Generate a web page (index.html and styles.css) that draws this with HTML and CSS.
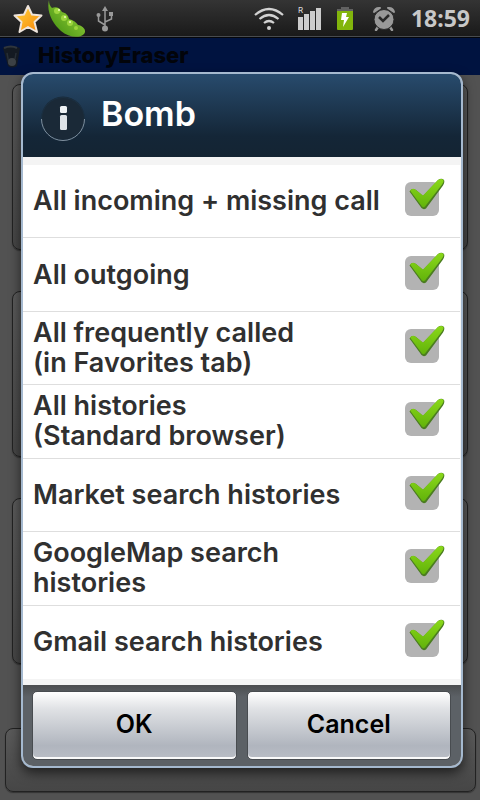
FILE: index.html
```html
<!DOCTYPE html>
<html lang="en">
<head>
<meta charset="utf-8">
<meta name="viewport" content="width=device-width, initial-scale=1">
<title>HistoryEraser</title>
<link rel="stylesheet" href="styles.css">
</head>
<body>
<svg class="defs" aria-hidden="true">
  <defs>
    <linearGradient id="green" x1="0" y1="0" x2="0" y2="1"><stop offset="0" stop-color="#8ad81a"/><stop offset="1" stop-color="#62b30a"/></linearGradient>
    <symbol id="tick" viewBox="0 0 38 32">
      <path d="M.5 13.500Q3 9.500 7 12L14 18L29 2Q32.500-.5 35 2Q36 4.500 34 7.500L17 30.500Q14.500 32 12.500 30z" fill="#4b7d20"/>
      <path d="M1 12.500Q3.500 9.500 7 12L14 17.500L29 2Q32.500 0 34.500 2Q35 4 33 6.500L16 28.500Q14.500 30 13 28.500z" fill="url(#green)"/>
    </symbol>
  </defs>
</svg>
<header class="status">
  <div class="group">
    <svg width="30" height="30" viewBox="0 0 30 30" aria-hidden="true">
      <defs><linearGradient id="gold" x1="0" y1="0" x2="1" y2="1"><stop offset="0" stop-color="#ffd63c"/><stop offset="1" stop-color="#f88408"/></linearGradient></defs>
      <path d="M15 2l4 8.500 9.500 1-7 6.500 2.500 10-9-5-8.500 5 2-10-7-6.500 9.500-1z" fill="url(#gold)" stroke="#eee4dc" stroke-width="2" stroke-linejoin="round"/>
    </svg>
    <svg width="40" height="37" viewBox="0 0 40 37" aria-hidden="true">
      <defs><linearGradient id="pod" x1="1" y1="0" x2="0" y2="1"><stop offset="0" stop-color="#a5dc43"/><stop offset="1" stop-color="#3b8a0c"/></linearGradient></defs>
      <path d="M1 0C1 4 2 6 4 8C8 6 12 8 14 12C18 13 20 15 21 19C25 20 28 22 30 25C35 26 39 30 36 34C31 39 20 37 13 31C5 24-2 12 1 0z" fill="url(#pod)"/>
      <circle cx="9" cy="11" r="3" fill="#9cd53d"/><circle cx="16" cy="18" r="3" fill="#9cd53d"/><circle cx="22" cy="23" r="3" fill="#9cd53d"/><circle cx="28" cy="28" r="2" fill="#9cd53d"/>
      <circle cx="11" cy="10" r="1" fill="#efb"/><circle cx="17" cy="17" r="1" fill="#efb"/><circle cx="22" cy="22" r="1" fill="#efb"/>
    </svg>
    <svg width="22" height="26" viewBox="-3 0 22 26" fill="none" stroke="#999" stroke-width="1.500" aria-hidden="true">
      <path d="M9 22V3M9 19L2.500 15V10M9 16L15.500 13V9"/><path d="M9 0l3 5H6z" fill="#999" stroke="none"/><circle cx="9" cy="22.500" r="3" fill="#999" stroke="none"/><circle cx="2.500" cy="9" r="2" fill="#999" stroke="none"/><path d="M13 6h4v4h-4z" fill="#999" stroke="none"/>
    </svg>
  </div>
  <div class="group right">
    <svg width="30" height="24" viewBox="0 0 30 24" fill="none" stroke="#d2d2d2" stroke-width="2.200" aria-hidden="true">
      <path d="M1 8Q15-4 29 8M5.500 12Q15 4 24.500 12M10 16Q15 12 20 16"/><circle cx="15" cy="21" r="2" fill="#d2d2d2" stroke="none"/>
    </svg>
    <span class="signal">
      <svg width="24" height="22" viewBox="0 0 24 22" fill="#ccc" aria-hidden="true"><path d="M0 9h5v13H0zM6 6h5v16H6zM12 3h5v19h-5zM18 0h5v22h-5z"/></svg>
      <span class="roam">R</span>
    </span>
    <svg width="18" height="24" viewBox="0 0 18 24" aria-hidden="true"><path d="M5 0h8v2h4v3H1V2h4z" fill="#616161"/><path d="M1 4h16v18q0 1-1 1H2q-1 0-1-1z" fill="#82b50c"/><path d="M6 6h5l-1 4h3L7 20l1-7H5z" fill="#fff"/></svg>
    <svg class="alarm" width="24" height="25" viewBox="0 0 24 25" aria-hidden="true"><path d="M6 21l-2 3M18 21l2 3" stroke="#999" stroke-width="2.500" stroke-linecap="round"/><path d="M2 6Q3 1.500 8 2zM22 6Q21 1.500 16 2z" fill="#999" stroke="#999" stroke-width="2" stroke-linejoin="round"/><circle cx="12" cy="13.500" r="10" fill="#999" stroke="#2a2a2a"/><path d="M7 11l4 4 6-6" fill="none" stroke="#292929" stroke-width="2.500"/></svg>
    <time class="time">18:59</time>
  </div>
</header>
<div class="app">
  <div class="titlebar">
    <svg width="20" height="24" viewBox="0 0 20 24" aria-hidden="true"><path d="M1 3q8-4 17 0l-3 18q-5 3-9 0z" fill="#141a22"/><path d="M2 3q7-3 13 0" fill="none" stroke="#30363c" stroke-width="2"/><path d="M5 8l2 11M14 8l-1 6" stroke="#272e36" stroke-width="1.500"/><circle cx="10" cy="17" r="4" fill="#3c4145"/></svg>
    <h1>HistoryEraser</h1>
  </div>
  <main class="cards">
    <div class="card"></div>
    <div class="card"></div>
    <div class="card"></div>
  </main>
  <div class="bottom"></div>
</div>
<form class="dialog" role="dialog" aria-labelledby="dialog-title">
  <div class="head">
    <svg width="46" height="46" viewBox="0 0 46 46" aria-hidden="true"><circle cx="23" cy="22" r="21.500" fill="#1a2937"/><path d="M1.500 23a21.500 21.500 0 0 0 43 0" fill="none" stroke="#7f909f"/><path d="M1.500 23a21.500 21.500 0 0 1 43 0" fill="none" stroke="#1b3042"/><rect x="20" y="10" width="7" height="7" rx="1.500" fill="#eef2f5"/><rect x="20" y="19" width="7" height="15" rx="1.500" fill="#dde3e8"/></svg>
    <h2 id="dialog-title">Bomb</h2>
  </div>
  <div class="list">
    <label class="row"><span>All incoming + missing call</span><span class="check"><input type="checkbox" checked><svg aria-hidden="true"><use href="#tick"/></svg></span></label>
    <label class="row"><span>All outgoing</span><span class="check"><input type="checkbox" checked><svg aria-hidden="true"><use href="#tick"/></svg></span></label>
    <label class="row"><span>All frequently called<br>(in Favorites tab)</span><span class="check"><input type="checkbox" checked><svg aria-hidden="true"><use href="#tick"/></svg></span></label>
    <label class="row"><span>All histories<br>(Standard browser)</span><span class="check"><input type="checkbox" checked><svg aria-hidden="true"><use href="#tick"/></svg></span></label>
    <label class="row"><span>Market search histories</span><span class="check"><input type="checkbox" checked><svg aria-hidden="true"><use href="#tick"/></svg></span></label>
    <label class="row"><span>GoogleMap search<br>histories</span><span class="check"><input type="checkbox" checked><svg aria-hidden="true"><use href="#tick"/></svg></span></label>
    <label class="row"><span>Gmail search histories</span><span class="check"><input type="checkbox" checked><svg aria-hidden="true"><use href="#tick"/></svg></span></label>
  </div>
  <div class="actions">
    <button type="button">OK</button>
    <button type="button">Cancel</button>
  </div>
</form>
</body>
</html>
```
FILE: styles.css
```css
* { box-sizing: border-box; }
body {
  margin: 0;
  min-height: 100vh;
  display: flex;
  flex-direction: column;
  position: relative;
  background: #525252;
  font-family: Inter, "Liberation Sans", sans-serif;
}
h1, h2 { margin: 0; }
svg { display: block; flex: none; }
.defs { position: absolute; width: 0; height: 0; }

.status {
  height: 38px;
  padding: 0 10px 0 13px;
  display: flex;
  justify-content: space-between;
  background: linear-gradient(#343434, #191919);
  border-bottom: 1px solid #05070c;
  box-shadow: inset 0 -1px #484b4e;
}
.group { display: flex; align-items: center; gap: 5px; }
.right { gap: 14px; }
.signal { position: relative; }
.roam {
  position: absolute;
  left: 0;
  top: -3px;
  color: #ddd;
  font-size: 8px;
  line-height: 10px;
}
.alarm { margin: 0 1px 0 4px; }
.time {
  color: #c8c8c8;
  font-family: "Noto Sans", sans-serif;
  font-size: 23px;
  line-height: 28px;
  font-weight: 700;
  padding-bottom: 2px;
}

.app { flex: 1; display: flex; flex-direction: column; }
.titlebar {
  height: 37px;
  padding-left: 2px;
  display: flex;
  align-items: center;
  gap: 16px;
  background: #001340;
}
.titlebar h1 { padding-bottom: 3px; font-size: 22px; line-height: 26px; font-weight: 800; color: #02040a; }
.cards {
  flex: 1;
  padding: 9px 12px 0;
  display: flex;
  flex-direction: column;
  gap: 41px;
}
.card, .bottom {
  border: 1px solid #222;
  border-radius: 8px;
  background: linear-gradient(#5a5a5a, #464646);
  box-shadow: 0 1px 1px #333;
}
.card { height: 166px; }
.bottom { height: 64px; margin: 0 4px 8px 5px; }

.dialog {
  position: absolute;
  top: 72px;
  left: 21px;
  right: 17px;
  border: 2px solid #a5b9cf;
  border-radius: 12px;
  overflow: hidden;
  background: #f4f4f4;
  box-shadow: 0 5px 12px rgba(0, 0, 0, 0.6);
}
.head {
  height: 83px;
  padding: 6px 17px 0;
  display: flex;
  align-items: center;
  gap: 15px;
  background: linear-gradient(#284b6d, #142637 75%, #142433);
}
.head h2 {
  padding-bottom: 9px;
  color: #fff;
  font-size: 34px;
  line-height: 36px;
  font-weight: 600;
}
.list {
  height: 514px;
  margin: 8px 1px 6px 0;
  display: grid;
  grid-template-rows: repeat(7, 1fr);
  background: #fff;
}
.row {
  padding: 0 15px 0 10px;
  display: flex;
  align-items: center;
  justify-content: space-between;
  border-bottom: 1px solid #dedede;
  color: #303030;
  font-size: 27px;
  line-height: 30px;
  font-weight: 600;
}
.row:last-child { border-bottom: 0; }
.check { position: relative; width: 40px; flex: none; padding-bottom: 4px; }
.check input {
  appearance: none;
  display: block;
  width: 34px;
  height: 34px;
  margin: 0;
  border-radius: 6px;
  background: #b3b3b3;
}
.check svg {
  position: absolute;
  left: 4px;
  top: -4px;
  width: 38px;
  height: 32px;
  pointer-events: none;
}
.check input:not(:checked) + svg { display: none; }
.actions {
  height: 81px;
  padding: 6px 10px 6px 9px;
  display: grid;
  grid-template-columns: 1fr 1fr;
  gap: 10px;
  background: linear-gradient(#4b4d4f, #5c6166 12px, #5c6166);
}
.actions button {
  border: 1px solid #484c50;
  border-radius: 5px;
  background: linear-gradient(#fff, #e0e2e5 25%, #b0b5be 80%, #b9bdc5);
  box-shadow: inset 0 -2px #fafafa;
  color: #000;
  font-family: inherit;
  font-size: 25px;
  line-height: 28px;
  font-weight: 600;
  padding: 0 0 4px;
}
```
